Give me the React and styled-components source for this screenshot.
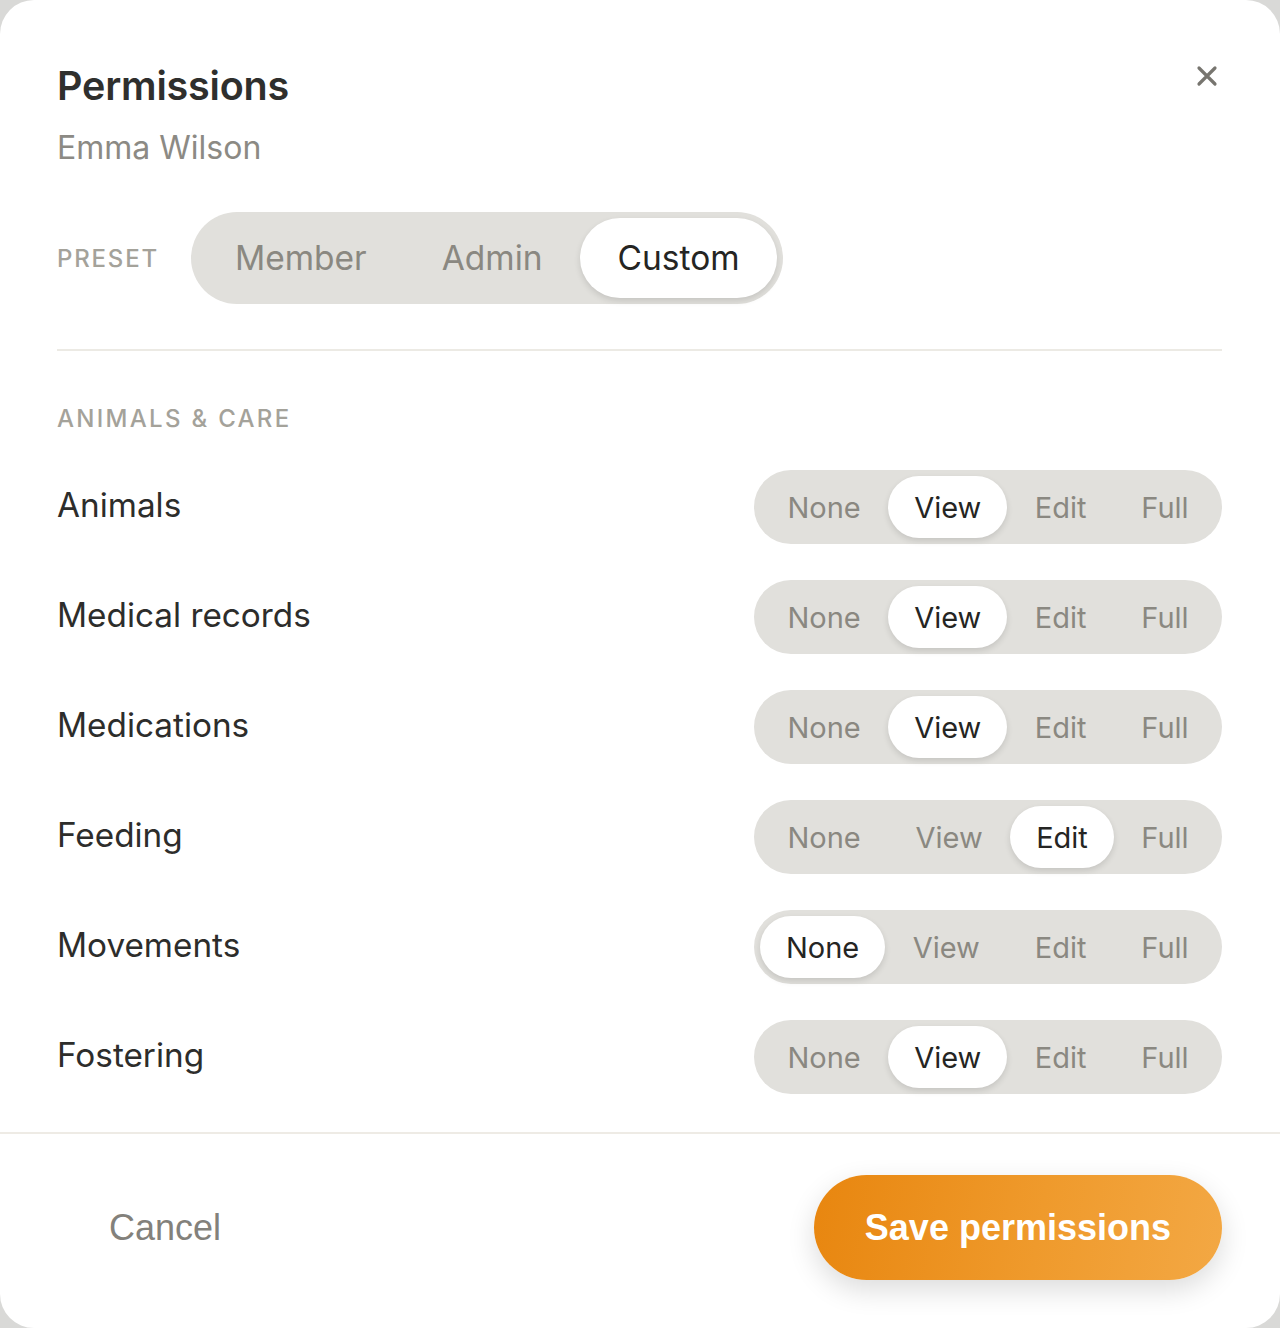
import React, { useState } from 'react';
import styled, { createGlobalStyle } from 'styled-components';

const GlobalStyle = createGlobalStyle`
  html, body {
    margin: 0;
    padding: 0;
    background: #d9d9d7;
  }
  body {
    font-family: "Inter", "Noto Sans", sans-serif;
    -webkit-font-smoothing: antialiased;
  }
  * { box-sizing: border-box; }
`;

const LEVELS = ['None', 'View', 'Edit', 'Full'];

const initialRows = [
  { key: 'animals', label: 'Animals', level: 'View' },
  { key: 'medical', label: 'Medical records', level: 'View' },
  { key: 'meds', label: 'Medications', level: 'View' },
  { key: 'feeding', label: 'Feeding', level: 'Edit' },
  { key: 'movements', label: 'Movements', level: 'None' },
  { key: 'fostering', label: 'Fostering', level: 'View' },
];

export default function App() {
  const [preset, setPreset] = useState('Custom');
  const [rows, setRows] = useState(initialRows);

  const setLevel = (key, level) => {
    setRows(rows.map((r) => (r.key === key ? { ...r, level } : r)));
    setPreset('Custom');
  };

  return (
    <>
      <GlobalStyle />
      <Modal>
        <Body>
          <Header>
            <div>
              <Title>Permissions</Title>
              <Subtitle>Emma Wilson</Subtitle>
            </div>
            <CloseButton aria-label="Close">
              <svg width="22" height="22" viewBox="0 0 22 22">
                <path d="M3 3 L19 19 M19 3 L3 19" stroke="#77756f" strokeWidth="3.2" strokeLinecap="round" />
              </svg>
            </CloseButton>
          </Header>

          <PresetRow>
            <SmallCaps>PRESET</SmallCaps>
            <PresetTrack>
              {['Member', 'Admin', 'Custom'].map((p) => (
                <PresetOption key={p} $active={preset === p} onClick={() => setPreset(p)}>
                  {p}
                </PresetOption>
              ))}
            </PresetTrack>
          </PresetRow>

          <Divider />

          <SectionLabel>ANIMALS &amp; CARE</SectionLabel>

          <RowList>
            {rows.map((r) => (
              <Row key={r.key}>
                <RowLabel>{r.label}</RowLabel>
                <LevelTrack>
                  {LEVELS.map((l) => (
                    <LevelOption key={l} $active={r.level === l} onClick={() => setLevel(r.key, l)}>
                      {l}
                    </LevelOption>
                  ))}
                </LevelTrack>
              </Row>
            ))}
          </RowList>
        </Body>

        <Footer>
          <CancelButton>Cancel</CancelButton>
          <SaveButton>Save permissions</SaveButton>
        </Footer>
      </Modal>
    </>
  );
}

const Modal = styled.div`
  width: 1280px;
  min-height: 1328px;
  background: #ffffff;
  border-radius: 34px;
  display: flex;
  flex-direction: column;
  overflow: hidden;
`;

const Body = styled.div`
  padding: 58px 58px 32px 57px;
`;

const Header = styled.div`
  display: flex;
  justify-content: space-between;
  align-items: flex-start;
`;

const Title = styled.h1`
  margin: 0;
  font-size: 39.5px;
  line-height: 56px;
  font-weight: 600;
  color: #2f2f2d;
  letter-spacing: -0.2px;
`;

const Subtitle = styled.div`
  margin-top: 14px;
  font-size: 32px;
  line-height: 40px;
  color: #8c8a84;
`;

const CloseButton = styled.button`
  border: none;
  background: none;
  padding: 0;
  margin-top: 7px;
  margin-right: 4px;
  width: 22px;
  height: 22px;
  cursor: pointer;
  display: flex;
`;

const PresetRow = styled.div`
  display: flex;
  align-items: center;
  gap: 32px;
  margin-top: 44px;
`;

const SmallCaps = styled.span`
  font-size: 24px;
  font-weight: 500;
  letter-spacing: 1.8px;
  color: #a4a29a;
`;

const PresetTrack = styled.div`
  display: flex;
  background: #e1e0dc;
  border-radius: 999px;
  padding: 6px;
  height: 92px;
`;

const PresetOption = styled.button`
  border: none;
  font-family: inherit;
  font-size: 33.5px;
  padding: 0 37px 0 38px;
  border-radius: 999px;
  cursor: pointer;
  background: ${(p) => (p.$active ? '#ffffff' : 'transparent')};
  color: ${(p) => (p.$active ? '#252523' : '#8a8881')};
  box-shadow: ${(p) => (p.$active ? '0 3px 6px rgba(0,0,0,0.12)' : 'none')};
`;

const Divider = styled.hr`
  border: none;
  height: 2px;
  background: #eceae4;
  margin: 45px 0 0;
`;

const SectionLabel = styled(SmallCaps)`
  display: block;
  margin-top: 52px;
  line-height: 32px;
  letter-spacing: 2.3px;
`;

const RowList = styled.div`
  display: flex;
  flex-direction: column;
  gap: 36px;
  margin-top: 35px;
`;

const Row = styled.div`
  display: flex;
  justify-content: space-between;
  align-items: center;
`;

const RowLabel = styled.span`
  font-size: 33.3px;
  color: #2d2d2b;
  margin-top: -4px;
`;

const LevelTrack = styled.div`
  display: flex;
  width: 468px;
  height: 74px;
  padding: 6px;
  background: #e1e0dc;
  border-radius: 999px;
`;

const LevelOption = styled.button`
  border: none;
  font-family: inherit;
  font-size: 29px;
  flex: ${(p) => (p.$active ? '0 0 auto' : '1 1 auto')};
  padding: 0 26px;
  border-radius: 999px;
  cursor: pointer;
  background: ${(p) => (p.$active ? '#ffffff' : 'transparent')};
  color: ${(p) => (p.$active ? '#252523' : '#8a8881')};
  box-shadow: ${(p) => (p.$active ? '0 3px 6px rgba(0,0,0,0.12)' : 'none')};
`;

const Footer = styled.div`
  margin-top: auto;
  border-top: 2px solid #eeebe5;
  display: flex;
  justify-content: space-between;
  align-items: center;
  padding: 41px 58px 48px 57px;
`;

const CancelButton = styled.button`
  border: none;
  background: none;
  font-family: "Liberation Sans", Arial, sans-serif;
  font-size: 36px;
  color: #83817b;
  padding: 0 52px;
  height: 105px;
  cursor: pointer;
`;

const SaveButton = styled.button`
  border: none;
  height: 105px;
  padding: 0 51px;
  border-radius: 999px;
  font-family: "Liberation Sans", Arial, sans-serif;
  font-weight: 700;
  font-size: 36px;
  color: #ffffff;
  background: linear-gradient(100deg, #e8860f 0%, #ef9a2c 55%, #f3a844 100%);
  box-shadow: 0 10px 28px rgba(0, 0, 0, 0.14);
  cursor: pointer;
`;
